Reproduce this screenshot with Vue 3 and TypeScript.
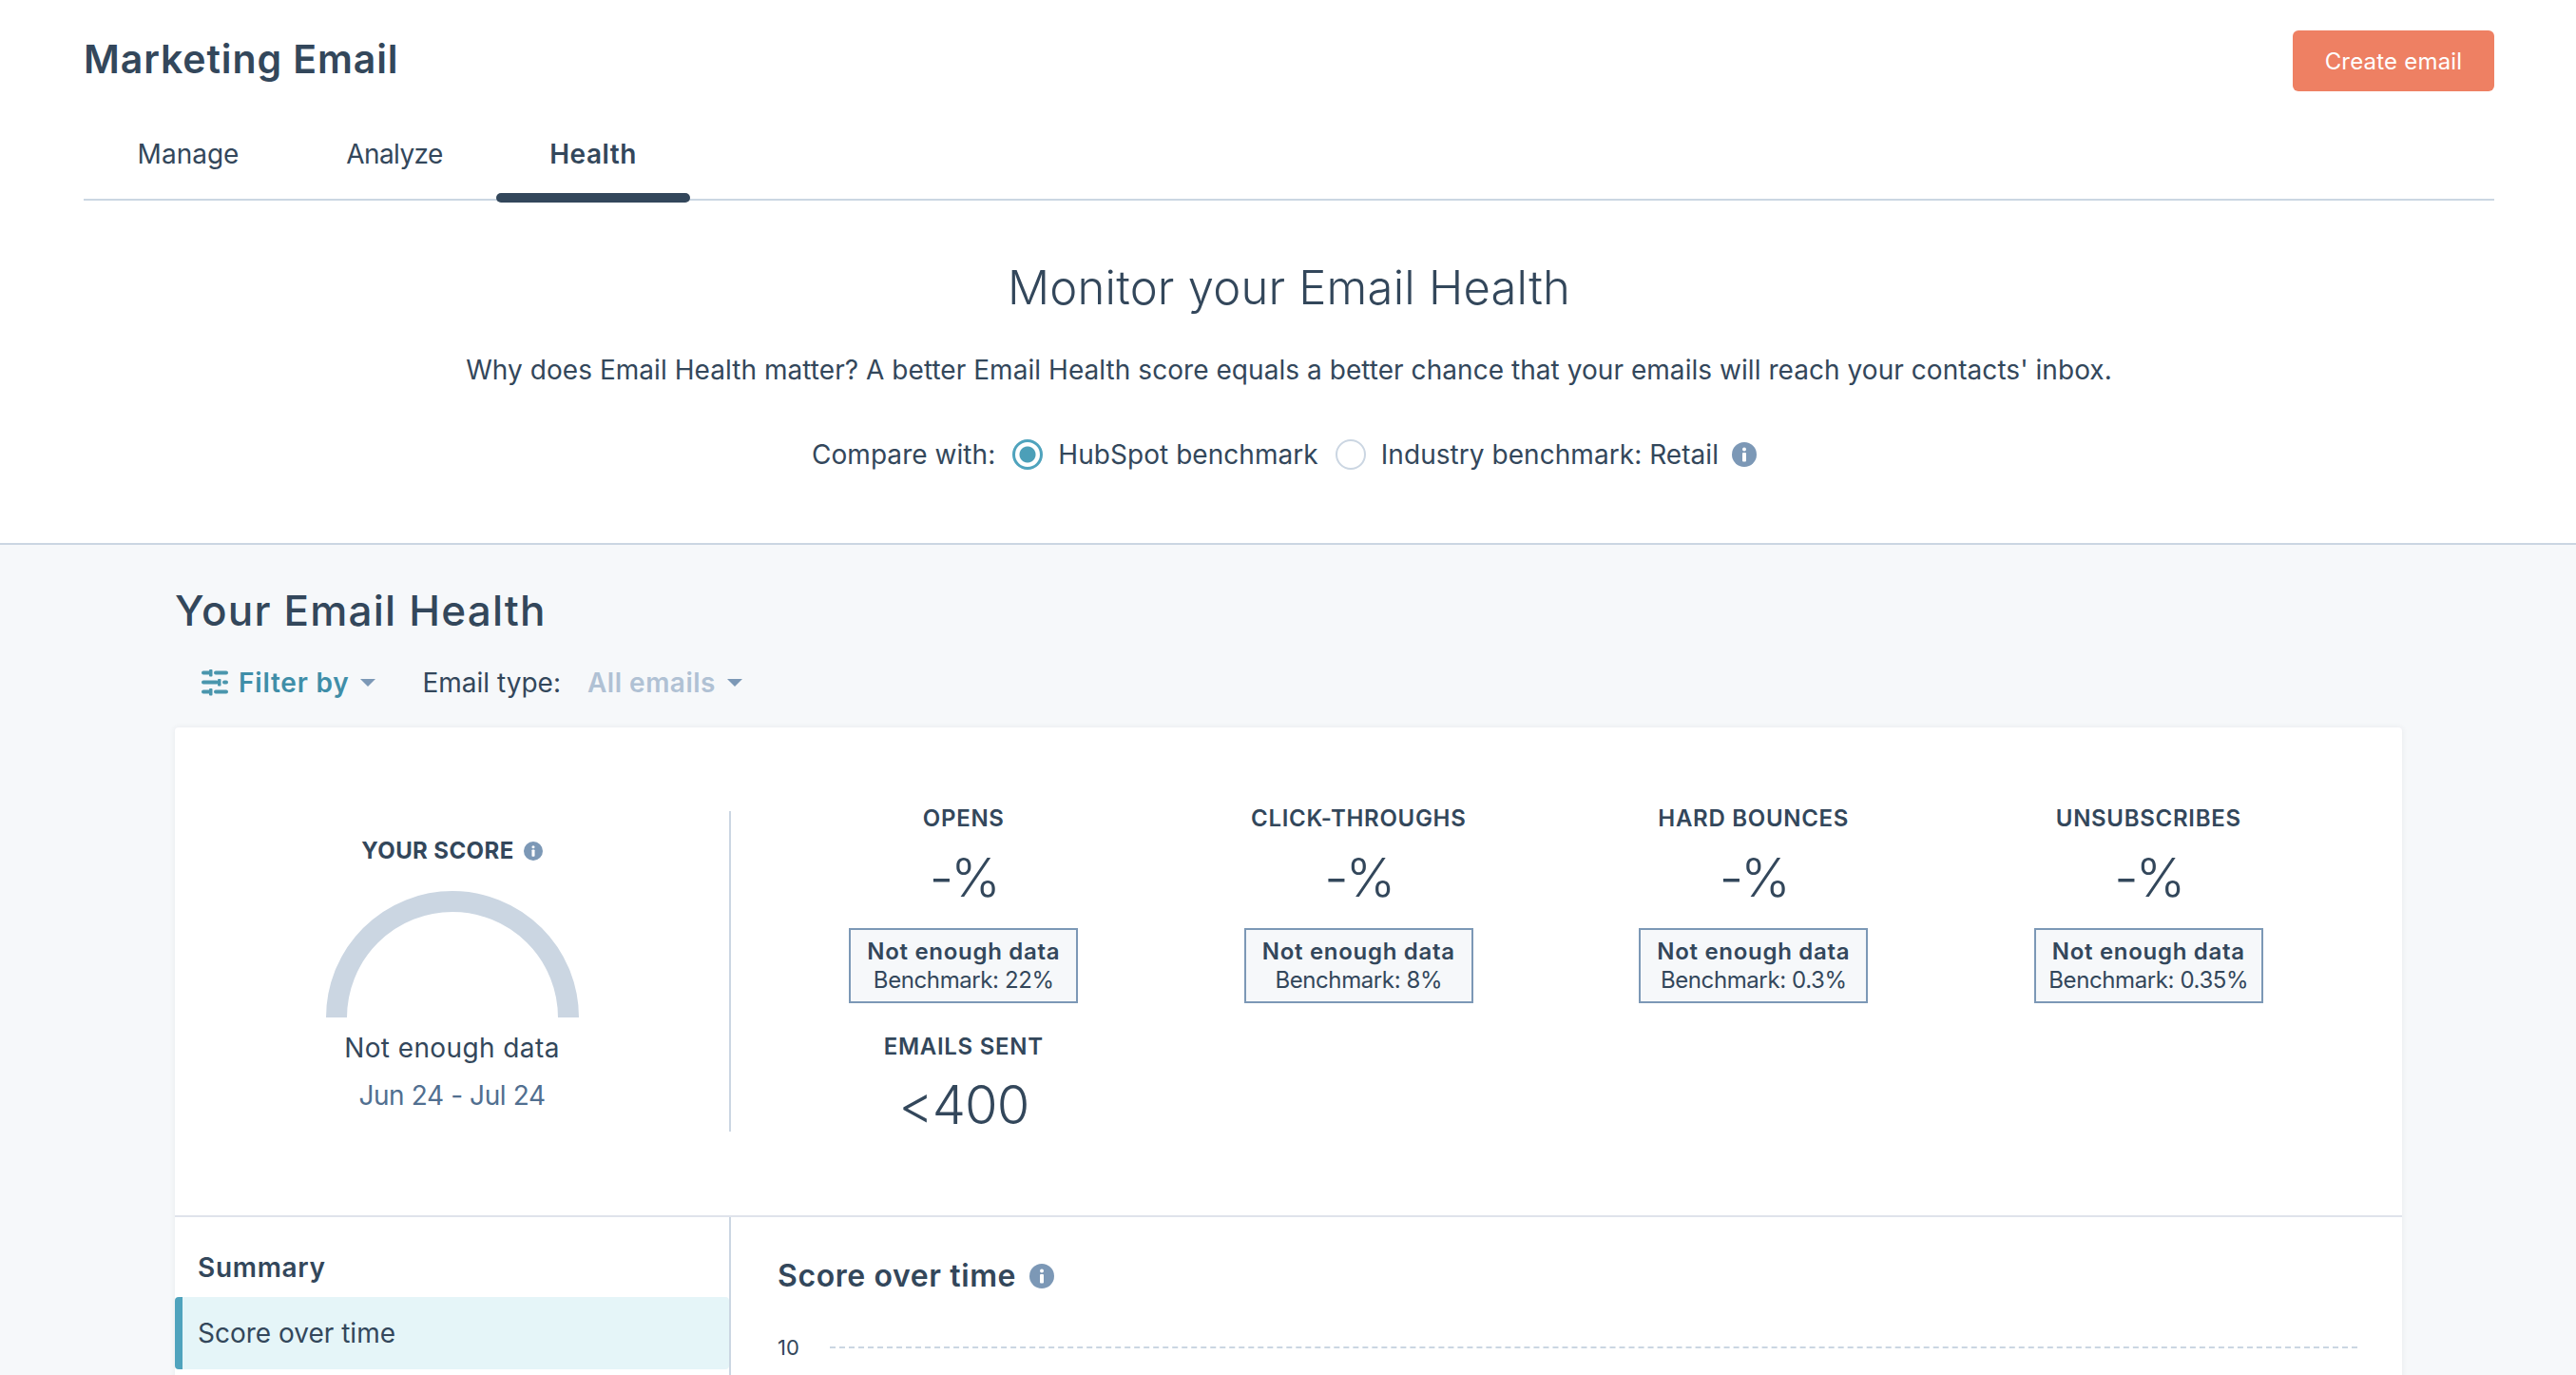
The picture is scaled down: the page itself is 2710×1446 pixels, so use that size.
<script setup lang="ts">
interface Metric {
  label: string;
  benchmark: string;
}

const tabs = ['Manage', 'Analyze', 'Health'];
const activeTab = 'Health';

const metrics: Metric[] = [
  { label: 'OPENS', benchmark: '22%' },
  { label: 'CLICK-THROUGHS', benchmark: '8%' },
  { label: 'HARD BOUNCES', benchmark: '0.3%' },
  { label: 'UNSUBSCRIBES', benchmark: '0.35%' },
];
</script>

<template>
  <div class="page">
    <header class="top">
      <div class="title-row">
        <h1 class="page-title">Marketing Email</h1>
        <button class="create-btn">Create email</button>
      </div>
      <nav class="tabs">
        <div v-for="tab in tabs" :key="tab" class="tab" :class="{ active: tab === activeTab }">{{ tab }}</div>
      </nav>
    </header>

    <section class="intro">
      <h2 class="intro-title">Monitor your Email Health</h2>
      <p class="intro-text">Why does Email Health matter? A better Email Health score equals a better chance that your emails will reach your contacts' inbox.</p>
      <div class="compare">
        <span class="compare-label">Compare with:</span>
        <span class="radio checked"></span>
        <span class="radio-label">HubSpot benchmark</span>
        <span class="radio"></span>
        <span class="radio-label">Industry benchmark: Retail</span>
        <svg class="info info-lg" viewBox="0 0 26 26">
          <circle cx="13" cy="13" r="13" fill="#7c98b6" />
          <circle cx="13" cy="7.5" r="2" fill="#fff" />
          <rect x="11" y="11" width="4" height="9.5" rx="1" fill="#fff" />
        </svg>
      </div>
    </section>

    <main class="health">
      <h2 class="health-title">Your Email Health</h2>
      <div class="filters">
        <span class="filter-by">
          <svg class="filter-icon" viewBox="0 0 28 28">
            <path
              d="M2 3.5h6M15 3.5h11M2 13.5h14M24 13.5h2M2 23.5h6M15 23.5h11"
              fill="none"
              stroke="#4a96ad"
              stroke-width="4"
              stroke-linecap="round"
            />
            <g fill="#4a96ad">
              <rect x="8" y="0" width="3.5" height="7.5" rx="1" />
              <rect x="17" y="10" width="3.5" height="7.5" rx="1" />
              <rect x="8" y="20" width="3.5" height="7.5" rx="1" />
            </g>
          </svg>
          <span class="filter-text">Filter by</span>
          <span class="caret"></span>
        </span>
        <span class="email-type">Email type:</span>
        <span class="all-emails"><span class="all-text">All emails</span><span class="caret"></span></span>
      </div>

      <div class="card">
        <div class="overview">
          <div class="score">
            <div class="score-label">
              YOUR SCORE
              <svg class="info" viewBox="0 0 26 26">
                <circle cx="13" cy="13" r="13" fill="#7c98b6" />
                <circle cx="13" cy="7.5" r="2" fill="#fff" />
                <rect x="11" y="11" width="4" height="9.5" rx="1" fill="#fff" />
              </svg>
            </div>
            <svg class="gauge" viewBox="0 0 266 134">
              <path d="M11 134a122 122 0 0 1 244 0" fill="none" stroke="#cbd6e2" stroke-width="22" />
            </svg>
            <div class="score-status">Not enough data</div>
            <div class="score-dates">Jun 24 - Jul 24</div>
          </div>
          <div class="metrics">
            <div v-for="m in metrics" :key="m.label" class="metric">
              <div class="metric-label">{{ m.label }}</div>
              <div class="metric-value">-%</div>
              <div class="metric-box">
                <strong>Not enough data</strong>
                <span>Benchmark: {{ m.benchmark }}</span>
              </div>
            </div>
            <div class="metric sent">
              <div class="metric-label">EMAILS SENT</div>
              <div class="metric-value">&lt;400</div>
            </div>
          </div>
        </div>

        <div class="detail">
          <aside class="side">
            <div class="side-title">Summary</div>
            <div class="side-item">Score over time</div>
          </aside>
          <div class="chart">
            <div class="chart-title">
              Score over time
              <svg class="info info-lg" viewBox="0 0 26 26">
                <circle cx="13" cy="13" r="13" fill="#7c98b6" />
                <circle cx="13" cy="7.5" r="2" fill="#fff" />
                <rect x="11" y="11" width="4" height="9.5" rx="1" fill="#fff" />
              </svg>
            </div>
            <div class="axis-row">
              <span class="axis-label">10</span>
              <span class="axis-line"></span>
            </div>
          </div>
        </div>
      </div>
    </main>
  </div>
</template>

<style>
html,
body {
  margin: 0;
  overflow: hidden;
}
</style>

<style scoped>
.page {
  width: 2710px;
  height: 1446px;
  overflow: hidden;
  background: #fff;
  color: #33475b;
  font-family: Inter, "Noto Sans", sans-serif;
  display: flex;
  flex-direction: column;
}

.top {
  flex: none;
  padding: 32px 86px 0 88px;
}

.title-row {
  display: flex;
  justify-content: space-between;
  align-items: flex-start;
  height: 96px;
}

.page-title {
  margin: 0;
  font-size: 41px;
  line-height: 60px;
  font-weight: 600;
  letter-spacing: 0.9px;
}

.create-btn {
  width: 212px;
  height: 64px;
  border: none;
  border-radius: 6px;
  background: #ee8063;
  color: #fff;
  font: 400 24px Inter, sans-serif;
  letter-spacing: 0.2px;
  padding: 0;
}

.tabs {
  display: flex;
  height: 81px;
  border-bottom: 2px solid #cbd6e2;
}

.tab {
  position: relative;
  width: 220px;
  text-align: center;
  font-size: 28px;
  line-height: 68px;
}

.tab:nth-child(2) {
  width: 214px;
  letter-spacing: -0.6px;
}

.tab:nth-child(3) {
  width: 204px;
  letter-spacing: 0.5px;
}

.tab.active {
  font-weight: 600;
}

.tab.active::after {
  content: '';
  position: absolute;
  left: 0;
  right: 0;
  bottom: -4px;
  height: 10px;
  border-radius: 5px;
  background: #33475b;
}

.intro {
  flex: none;
  height: 362px;
  box-sizing: border-box;
  padding: 64px 0 0 2px;
  text-align: center;
  border-bottom: 2px solid #cbd6e2;
}

.intro-title {
  margin: 0;
  font-size: 49px;
  line-height: 56px;
  font-weight: 300;
  letter-spacing: 0.2px;
}

.intro-text {
  margin: 38px 0 0;
  font-size: 28px;
  line-height: 40px;
  letter-spacing: 0.05px;
}

.compare {
  margin-top: 49px;
  padding-right: 10px;
  display: flex;
  justify-content: center;
  align-items: center;
  font-size: 28px;
  line-height: 40px;
  letter-spacing: 0.05px;
}

.compare-label {
  margin-right: 18px;
}

.radio {
  width: 32px;
  height: 32px;
  box-sizing: border-box;
  border: 2px solid #cbd6e2;
  border-radius: 50%;
  background: #fff;
  margin-right: 16px;
}

.radio.checked {
  border: 3px solid #4fa3bd;
  background: radial-gradient(circle, #4c9fb8 0 8px, #fff 9px);
}

.radio-label {
  margin-right: 18px;
}

.radio-label:last-of-type {
  margin-right: 14px;
}

.info {
  width: 20px;
  height: 20px;
  flex: none;
}

.info-lg {
  width: 26px;
  height: 26px;
}

.health {
  flex: 1;
  min-height: 0;
  background: #f6f8fa;
  padding: 0 183px 0 184px;
}

.health-title {
  margin: 0;
  padding-top: 39px;
  font-size: 44px;
  line-height: 60px;
  font-weight: 500;
  letter-spacing: 1.2px;
}

.filters {
  margin-top: 26px;
  display: flex;
  align-items: center;
  height: 40px;
  padding-left: 28px;
  font-size: 28px;
}

.filter-by {
  display: flex;
  align-items: center;
  color: #3f8ea8;
  font-weight: 600;
  gap: 11px;
}

.filter-text {
  letter-spacing: 0.8px;
}

.filter-icon {
  width: 28px;
  height: 28px;
}

.caret {
  display: inline-block;
  width: 0;
  height: 0;
  border-left: 8px solid transparent;
  border-right: 8px solid transparent;
  border-top: 8px solid #7c98b6;
}

.email-type {
  margin-left: 50px;
}

.all-emails {
  display: flex;
  align-items: center;
  gap: 12px;
  margin-left: 28px;
  color: #b0c1d4;
  font-weight: 600;
}

.all-text {
  letter-spacing: 0.5px;
}

.card {
  margin-top: 27px;
  background: #fff;
  border-radius: 4px 4px 0 0;
  box-shadow: 0 0 6px rgba(45, 62, 80, 0.08);
}

.overview {
  display: flex;
  height: 515px;
  box-sizing: border-box;
  border-bottom: 2px solid #dfe3eb;
  padding-top: 88px;
}

.score {
  width: 585px;
  height: 337px;
  box-sizing: border-box;
  border-right: 2px solid #cbd6e2;
  text-align: center;
  display: flex;
  flex-direction: column;
  align-items: center;
}

.score-label {
  display: flex;
  align-items: center;
  gap: 10px;
  margin-top: 26px;
  font-size: 24px;
  line-height: 32px;
  font-weight: 700;
  letter-spacing: 0.4px;
}

.gauge {
  width: 266px;
  height: 134px;
  margin-top: 25px;
}

.score-status {
  margin-top: 12px;
  font-size: 28px;
  line-height: 40px;
  letter-spacing: 0.4px;
}

.score-dates {
  margin-top: 10px;
  font-size: 28px;
  line-height: 40px;
  letter-spacing: -0.4px;
  color: #516f90;
}

.metrics {
  width: 1662px;
  padding-left: 37px;
  box-sizing: border-box;
  display: grid;
  grid-template-columns: repeat(4, 415.5px);
  align-content: start;
  margin-top: -8px;
}

.metric {
  display: flex;
  flex-direction: column;
  align-items: center;
}

.metric-label {
  font-size: 24px;
  line-height: 32px;
  font-weight: 600;
  letter-spacing: 0.7px;
}

.metric-value {
  margin-top: 14px;
  font-size: 56px;
  line-height: 64px;
  font-weight: 300;
  letter-spacing: -3px;
}

.metric-box {
  margin-top: 21px;
  width: 241px;
  height: 79px;
  box-sizing: border-box;
  border: 2px solid #7c98b6;
  background: #f6f8fa;
  display: flex;
  flex-direction: column;
  align-items: center;
  justify-content: center;
  font-size: 24px;
  line-height: 30px;
  letter-spacing: -0.4px;
}

.metric-box strong {
  font-weight: 600;
  letter-spacing: 0.7px;
}

.sent {
  margin-top: 30px;
}

.sent .metric-value {
  margin-top: 13px;
  letter-spacing: -1px;
}

.detail {
  display: flex;
  height: 400px;
}

.side {
  width: 585px;
  box-sizing: border-box;
  border-right: 2px solid #cbd6e2;
  padding-top: 33px;
}

.side-title {
  padding-left: 24px;
  font-size: 28px;
  line-height: 40px;
  font-weight: 600;
  letter-spacing: 0.7px;
}

.side-item {
  margin-top: 11px;
  height: 76px;
  box-sizing: border-box;
  line-height: 76px;
  font-size: 28px;
  background: #e5f5f8;
  border-left: 8px solid #4fa3bd;
  border-radius: 4px;
  padding-left: 16px;
}

.chart {
  flex: 1;
  padding: 42px 47px 0 49px;
}

.chart-title {
  display: flex;
  align-items: center;
  gap: 14px;
  font-size: 32px;
  line-height: 40px;
  font-weight: 600;
  letter-spacing: 0.6px;
}

.axis-row {
  margin-top: 39px;
  display: flex;
  align-items: center;
  gap: 32px;
}

.axis-label {
  font-size: 22px;
  line-height: 32px;
}

.axis-line {
  flex: 1;
  border-top: 2px dashed #cbd6e2;
}
</style>
